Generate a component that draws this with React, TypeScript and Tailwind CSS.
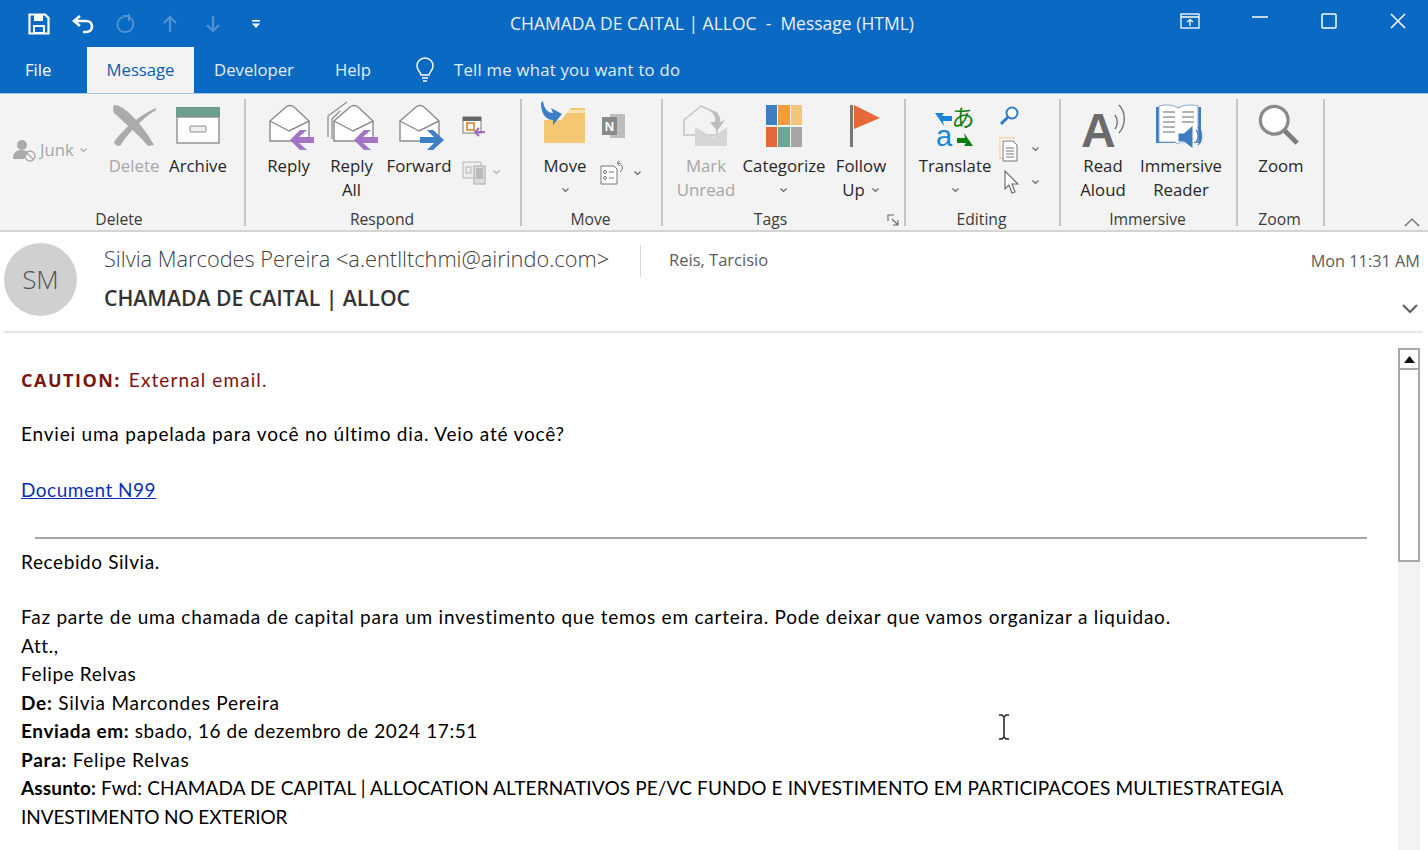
import React from "react";

const seg = '"Open Sans","Noto Sans",sans-serif';

function Chev({ className = "", color = "#666" }: { className?: string; color?: string }) {
  return (
    <svg width="9" height="6" viewBox="0 0 9 6" className={className}>
      <path d="M1.5 1.5 L4.5 4.5 L7.5 1.5" fill="none" stroke={color} strokeWidth="1.2" />
    </svg>
  );
}

function Env({ arrow, dir, all, dx = 4 }: { arrow: string; dir: "l" | "r"; all?: boolean; dx?: number }) {
  return (
    <svg width="50" height="50" viewBox="0 0 50 50" className="overflow-visible">
      {all && (
        <>
          <path d="M1 35 V14 L20 0" fill="none" stroke="#8a8a8a" strokeWidth="1.2" />
          <path d="M5 37 V17 L13 9" fill="none" stroke="#8a8a8a" strokeWidth="1.2" />
        </>
      )}
      <g transform={`translate(${dx} 0)`}>
        <path d="M2 19 L18 5 Q22 2 26 5 L41 19 V39 H2 Z" fill="#fff" stroke="#8a8a8a" strokeWidth="1.4" />
        <path d="M2 19 L21 29 L41 19" fill="none" stroke="#8a8a8a" strokeWidth="1.4" />
        {dir === "l" ? (
          <path d="M22 38 L32 28 H39 L31 35 H46 V41 H31 L39 48 H32 Z" fill={arrow} />
        ) : (
          <path d="M22 35 H36 L29 28 H35 L46 38 L35 48 H29 L36 41 H22 Z" fill={arrow} />
        )}
      </g>
    </svg>
  );
}

function Btn({ w, icon, lines, dim, chev }: { w: number; icon: React.ReactNode; lines: string[]; dim?: boolean; chev?: boolean }) {
  return (
    <div className="flex flex-col items-center shrink-0" style={{ width: w }}>
      <div className="h-[53px] flex items-end justify-center">{icon}</div>
      <div className={`mt-[2px] text-[16.8px] leading-[24px] text-center whitespace-nowrap ${dim ? "text-[#a6a6a6]" : "text-[#262626]"}`}>
        {lines.map((l) => (
          <div key={l}>{l}</div>
        ))}
        {chev && <div className="h-[24px] flex items-center justify-center"><Chev /></div>}
      </div>
    </div>
  );
}

function Group({ w, label, children, pl = 0, lp = 2 }: { w: number; label: string; children: React.ReactNode; pl?: number; lp?: number }) {
  return (
    <div className="relative h-[127px] shrink-0 border-r-2 border-[#c6c6c6] flex flex-col" style={{ width: w }}>
      <div className="flex items-start h-[109px] shrink-0" style={{ paddingLeft: pl }}>{children}</div>
      <div className="text-center text-[15.7px] leading-[22px] shrink-0 text-[#3a3a3a]" style={{ paddingRight: lp }}>{label}</div>
    </div>
  );
}

const bodyLine = "text-[19px] leading-[28.5px] whitespace-nowrap";

export default function App() {
  return (
    <div className="w-[1428px] h-[850px] overflow-hidden bg-white flex flex-col" style={{ fontFamily: seg }}>
      {/* Title bar */}
      <div className="h-[47px] shrink-0 bg-[#0a69c2] flex items-center relative text-white">
        <div className="flex items-center pl-[28px]">
          <svg width="22" height="22" viewBox="0 0 22 22">
            <path d="M1.5 1.5 H17 L20.5 5 V20.5 H1.5 Z" fill="none" stroke="#fff" strokeWidth="2.2" />
            <rect x="6" y="2" width="9" height="6" fill="#fff" />
            <rect x="6" y="13" width="10" height="7" fill="none" stroke="#fff" strokeWidth="2" />
          </svg>
          <svg width="22" height="20" viewBox="0 0 22 20" className="ml-[22px]">
            <path d="M8 2 L2 7 L8 12 M2 7 H14 C22 7 22 18 14 18 H11" fill="none" stroke="#fff" strokeWidth="2.6" />
          </svg>
          <svg width="21" height="21" viewBox="0 0 21 21" className="ml-[21px]">
            <path d="M8 4 C0 6 1 19 10 19 C19 19 21 8 14 4 M14 1 V8 M8 3 H14" fill="none" stroke="#4e92d4" strokeWidth="2" />
          </svg>
          <svg width="16" height="18" viewBox="0 0 16 18" className="ml-[26px]">
            <path d="M8 17 V3 M2 8 L8 2 L14 8" fill="none" stroke="#4e92d4" strokeWidth="2.2" />
          </svg>
          <svg width="16" height="18" viewBox="0 0 16 18" className="ml-[27px]">
            <path d="M8 1 V15 M2 10 L8 16 L14 10" fill="none" stroke="#4e92d4" strokeWidth="2.2" />
          </svg>
          <svg width="10" height="10" viewBox="0 0 10 10" className="ml-[30px]">
            <rect x="1" y="1" width="8" height="1.6" fill="#fff" />
            <path d="M1 4.5 H9 L5 9 Z" fill="#fff" />
          </svg>
        </div>
        <div className="absolute left-[510px] top-[11px] text-[17.5px] leading-[24px] text-[#e8f0fa] whitespace-nowrap">
          CHAMADA DE CAITAL | ALLOC&nbsp; -&nbsp; Message (HTML)
        </div>
        <div className="ml-auto flex items-center h-full pb-[6px] text-white">
          <svg width="20" height="16" viewBox="0 0 20 16" className="mr-[52px]">
            <rect x="1" y="1" width="18" height="14" fill="none" stroke="#fff" strokeWidth="1.3" />
            <path d="M1 4 H19 M10 13 V6.5 M7 9 L10 6.5 L13 9" fill="none" stroke="#fff" strokeWidth="1.3" />
          </svg>
          <svg width="16" height="16" viewBox="0 0 16 16" className="mr-[53px]">
            <path d="M0 4 H16" stroke="#fff" strokeWidth="1.5" />
          </svg>
          <svg width="16" height="16" viewBox="0 0 16 16" className="mr-[53px]">
            <rect x="1" y="1" width="14" height="14" rx="1" fill="none" stroke="#fff" strokeWidth="1.5" />
          </svg>
          <svg width="16" height="16" viewBox="0 0 16 16" className="mr-[22px]">
            <path d="M1 1 L15 15 M15 1 L1 15" stroke="#fff" strokeWidth="1.5" />
          </svg>
        </div>
      </div>

      {/* Tabs */}
      <div className="h-[46px] shrink-0 bg-[#0a69c2] flex items-end text-[16.7px] text-[#e4eefa]">
        <div className="w-[87px] h-[46px] flex items-center pl-[25px] text-white">File</div>
        <div className="w-[107px] h-[46px] flex items-center justify-center bg-[#f3f3f3] text-[#0a5fb0]">Message</div>
        <div className="w-[120px] h-[46px] flex items-center justify-center">Developer</div>
        <div className="w-[58px] h-[46px] flex items-center justify-center ml-[10px]">Help</div>
        <div className="h-[46px] flex items-center ml-[32px]">
          <svg width="22" height="26" viewBox="0 0 22 26">
            <path d="M7 18 C6 14 3 13 3 9 A8 8 0 0 1 19 9 C19 13 16 14 15 18 Z M8 21 H14 M9 24 H13" fill="none" stroke="#fff" strokeWidth="1.4" />
          </svg>
          <span className="ml-[18px] tracking-[0.25px]">Tell me what you want to do</span>
        </div>
      </div>

      {/* Ribbon */}
      <div className="h-[139px] shrink-0 bg-[#f3f3f3] border-t-[1px] border-[#9fc6ea] border-b-[2px] border-b-[#d4d4d4] flex pt-[5px] relative">
        <Group w={246} label="Delete" lp={6}>
          <div className="w-[105px] shrink-0 flex items-center pl-[12px] pt-[38px] text-[#a6a6a6] text-[16.7px]">
            <svg width="26" height="26" viewBox="0 0 26 26">
              <circle cx="10" cy="8" r="5" fill="#aaa" />
              <path d="M1 22 C1 14 6 13 10 13 C13 13 15 14 16 16 L12 22 Z" fill="#aaa" />
              <circle cx="18" cy="19" r="5" fill="none" stroke="#aaa" strokeWidth="1.4" />
              <path d="M15 16 L21 22" stroke="#aaa" strokeWidth="1.4" />
            </svg>
            <span className="ml-[2px]">Junk</span>
            <Chev className="ml-[5px]" color="#aaa" />
          </div>
          <Btn w={58} dim lines={["Delete"]} icon={
            <svg width="46" height="42" viewBox="0 0 46 42" className="mb-[5px]">
              <path d="M3 0 C8 0 12 3 16 6 C26 15 36 27 43 40 L37 41 C27 29 14 18 3 8 Q1 3 3 0 Z" fill="#ababab" />
              <path d="M45 3 C30 9 12 24 3 37 Q4 41 9 41 C18 27 32 13 45 5 Z" fill="#ababab" />
            </svg>
          } />
          <Btn w={70} lines={["Archive"]} icon={
            <svg width="46" height="37" viewBox="0 0 46 37" className="mb-[8px]">
              <rect x="1" y="0" width="44" height="10" fill="#6d9d8d" />
              <rect x="2" y="10" width="42" height="26" fill="#fff" stroke="#8d8d8d" strokeWidth="1.4" />
              <rect x="15" y="19" width="16" height="6" rx="1" fill="#eee" stroke="#8d8d8d" />
            </svg>
          } />
        </Group>

        <Group w={276} label="Respond" pl={16}>
          <Btn w={53} lines={["Reply"]} icon={<Env arrow="#a474c4" dir="l" />} />
          <Btn w={73} lines={["Reply", "All"]} icon={<Env arrow="#a474c4" dir="l" all dx={5} />} />
          <Btn w={62} lines={["Forward"]} icon={<Env arrow="#3d7fc4" dir="r" />} />
          <div className="w-[60px] shrink-0 flex flex-col pl-[12px] pt-[16px] gap-[20px]">
            <svg width="24" height="24" viewBox="0 0 24 24">
              <rect x="1" y="2" width="18" height="16" fill="#fff" stroke="#777" />
              <rect x="1" y="2" width="18" height="4" fill="#666" />
              <rect x="5" y="8" width="7" height="7" fill="#fff" stroke="#d98324" strokeWidth="1.6" />
              <path d="M23 17 H13 M17 13 L13 17 L17 21" fill="none" stroke="#9e6fc0" strokeWidth="2" />
            </svg>
            <div className="flex items-center">
              <svg width="26" height="26" viewBox="0 0 26 26">
                <rect x="1" y="3" width="18" height="16" fill="#eee" stroke="#b5b5b5" />
                <rect x="12" y="7" width="11" height="18" fill="#ddd" stroke="#aaa" />
                <rect x="14" y="9" width="7" height="11" fill="#bbb" />
                <rect x="4" y="8" width="5" height="6" fill="none" stroke="#b5b5b5" />
              </svg>
              <Chev className="ml-[4px]" color="#aaa" />
            </div>
          </div>
        </Group>

        <Group w={141} label="Move" pl={19}>
          <Btn w={48} lines={["Move"]} chev icon={
            <svg width="46" height="44" viewBox="0 0 46 44" className="mb-[7px] -ml-[2px]">
              <path d="M3 19 L20 19 L30 7 H44 V42 H3 Z" fill="#f4c873" />
              <path d="M27 9 H44 V12 H26Z" fill="#fbe3b4" />
              <path d="M2 0 C3 8 7 12 12 12 L10 7 L21 13 L12 24 L12 19 C5 19 0 13 0 2 Z" fill="#3d7fc4" />
            </svg>
          } />
          <div className="flex flex-col pl-[11px] pt-[14px] gap-[21px]">
            <svg width="26" height="26" viewBox="0 0 26 26" className="ml-[1px]">
              <rect x="9" y="1" width="15" height="24" fill="#bdbdbd" />
              <rect x="1" y="4" width="15" height="18" fill="#8a8a8a" />
              <text x="8.5" y="18" textAnchor="middle" fontSize="13" fontWeight="700" fill="#fff" fontFamily="Liberation Sans">N</text>
            </svg>
            <div className="flex items-center">
              <svg width="26" height="26" viewBox="0 0 26 26">
                <path d="M1 6 H14 L17 9 V24 H1 Z" fill="#fff" stroke="#777" />
                <circle cx="5" cy="12" r="1.5" fill="none" stroke="#777" />
                <circle cx="5" cy="18" r="1.5" fill="none" stroke="#777" />
                <path d="M9 12 H14 M9 18 H14" stroke="#777" />
                <path d="M17 3 C23 3 24 9 20 12 M17 3 L20 1 M17 3 L20 6" fill="none" stroke="#777" />
              </svg>
              <Chev className="ml-[7px]" />
            </div>
          </div>
        </Group>

        <Group w={243} label="Tags" pl={13} lp={26}>
          <Btn w={60} dim lines={["Mark", "Unread"]} icon={
            <svg width="46" height="42" viewBox="0 0 46 42" className="mb-[5px]">
              <path d="M1 15 L18 1 L34 8 V30 H1 Z" fill="#f3f3f3" stroke="#c4c4c4" strokeWidth="1.5" />
              <path d="M12 22 L30 32 L44 22 V41 H12 Z" fill="#d6d6d6" />
              <path d="M26 5 C36 7 38 12 37 17 L42 15 L34 26 L27 17 L32 17 C33 12 31 9 26 5Z" fill="#bdbdbd" />
            </svg>
          } />
          <Btn w={96} lines={["Categorize"]} chev icon={
            <div className="grid grid-cols-3 gap-x-[1px] gap-y-[2px] w-[36px] h-[42px] mb-[5px]">
              <div className="bg-[#3f7fc1]" /><div className="bg-[#f59c38]" /><div className="bg-[#f2c579]" />
              <div className="bg-[#e4683a]" /><div className="bg-[#6fa797]" /><div className="bg-[#a6a6a6]" />
            </div>
          } />
          <div className="w-[60px] shrink-0 -ml-[1px]">
            <Btn w={60} lines={["Follow"]} icon={
              <svg width="38" height="42" viewBox="0 0 38 42" className="mb-[5px] ml-[2px]">
                <rect x="7" y="0" width="3" height="42" fill="#777" />
                <path d="M11 0 L37 13 L11 24 Z" fill="#e4683a" />
              </svg>
            } />
            <div className="text-[16.8px] leading-[24px] text-[#262626] flex items-center justify-center gap-[6px]">Up<Chev /></div>
          </div>
          <svg width="12" height="12" viewBox="0 0 12 12" className="absolute right-[5px] bottom-[0px]">
            <path d="M1 7 V1 H7 M5 5 L11 11 M11 6 V11 H6" fill="none" stroke="#666" strokeWidth="1.1" />
          </svg>
        </Group>

        <Group w={155} label="Editing" pl={9}>
          <Btn w={80} lines={["Translate"]} chev icon={
            <svg width="40" height="42" viewBox="0 0 40 42" className="mb-[5px] overflow-visible">
              <path d="M0 8 H9 L7 11 H17 V16 H8 L9 21 Z" fill="#1784d9" />
              <text x="28" y="21" textAnchor="middle" fontSize="23" fill="#107c10" fontFamily="Noto Sans CJK JP">あ</text>
              <text x="9" y="41" textAnchor="middle" fontSize="29" fill="#1784d9" fontFamily="Liberation Sans">a</text>
              <path d="M38 41 H29 L31 38 H22 V33 H30 L29 28 Z" fill="#107c10" />
            </svg>
          } />
          <div className="flex flex-col pl-[4px] pt-[6px]">
            <svg width="22" height="22" viewBox="0 0 22 22">
              <circle cx="13" cy="8" r="5.5" fill="#fff" stroke="#2a7cc7" strokeWidth="2" />
              <path d="M9 12 L2 19" stroke="#2a7cc7" strokeWidth="3" />
            </svg>
            <div className="flex items-center mt-[9px]">
              <svg width="22" height="26" viewBox="0 0 22 26">
                <rect x="1" y="2" width="14" height="20" fill="#fff" stroke="#f1c58c" />
                <path d="M4 5 H14 L18 9 V25 H4 Z" fill="#fff" stroke="#777" />
                <path d="M7 12 H15 M7 15 H15 M7 18 H15 M7 21 H15" stroke="#777" />
              </svg>
              <Chev className="ml-[10px]" />
            </div>
            <div className="flex items-center mt-[7px]">
              <svg width="22" height="26" viewBox="0 0 22 26">
                <path d="M6 2 V20 L10 16 L13 24 L16 23 L13 15 L19 15 Z" fill="#fff" stroke="#666" strokeWidth="1.1" />
              </svg>
              <Chev className="ml-[10px]" />
            </div>
          </div>
        </Group>

        <Group w={177} label="Immersive" pl={9}>
          <Btn w={66} lines={["Read", "Aloud"]} icon={
            <svg width="48" height="46" viewBox="0 0 48 46" className="mb-[5px] overflow-visible">
              <text x="2" y="46" fontSize="48" fontWeight="700" fill="#6b6b6b" fontFamily="Liberation Sans">A</text>
              <path d="M36 14 C39 18 39 24 36 28 M40 4 C47 11 47 24 40 32" fill="none" stroke="#6b6b6b" strokeWidth="1.3" />
            </svg>
          } />
          <Btn w={90} lines={["Immersive", "Reader"]} icon={
            <svg width="50" height="46" viewBox="0 0 50 46" className="mb-[2px] -ml-[5px]">
              <path d="M2 3 H47 V39 H2 Z" fill="#3f7cbf" />
              <path d="M5 2 C12 0 20 1 24 4 C29 1 38 0 44 2 V38 H27 L24 40 L21 38 H5 Z" fill="#fff" stroke="#8aa9cc" />
              <path d="M9 8 H21 M9 13 H21 M9 18 H21 M9 23 H21 M9 28 H21 M28 8 H40 M28 13 H40 M28 18 H40" stroke="#999" strokeWidth="1.3" />
              <path d="M24 29 H30 L39 21 V45 L30 38 H24 Z" fill="#3f7cbf" stroke="#fff" />
              <path d="M42 26 C45 29 45 35 42 38 M44 23 C49 28 49 36 44 41" fill="none" stroke="#3f7cbf" strokeWidth="1.2" />
            </svg>
          } />
        </Group>

        <Group w={87} label="Zoom">
          <Btn w={86} lines={["Zoom"]} icon={
            <svg width="42" height="42" viewBox="0 0 44 44" className="mb-[6px] -ml-[5px]">
              <circle cx="17" cy="17" r="14.5" fill="#fff" stroke="#8a8a8a" strokeWidth="3.5" />
              <path d="M28 28 L41 41" stroke="#7d7d7d" strokeWidth="5" />
            </svg>
          } />
        </Group>

        <svg width="16" height="10" viewBox="0 0 16 10" className="absolute right-[8px] bottom-[3px]">
          <path d="M1 9 L8 2 L15 9" fill="none" stroke="#666" strokeWidth="1.2" />
        </svg>
      </div>

      {/* Header */}
      <div className="h-[101px] shrink-0 relative">
        <div className="flex pl-[4px] pt-[11px]">
          <div className="w-[73px] h-[73px] rounded-full bg-[#d0d0d0] flex items-center justify-center text-[26px] font-light text-[#525252] shrink-0">SM</div>
          <div className="ml-[27px] pt-[2px]">
            <div className="flex items-start h-[34px]">
              <span className="text-[21.75px] font-light leading-[28px] text-[#404040] whitespace-nowrap">Silvia Marcodes Pereira &lt;a.entlltchmi@airindo.com&gt;</span>
              <div className="w-[1px] h-[32px] bg-[#d8d8d8] ml-[31px]" />
              <span className="text-[16.5px] leading-[30px] ml-[28px] text-[#5c5c5c]">Reis, Tarcisio</span>
            </div>
            <div className="text-[21.2px] font-semibold leading-[28px] text-[#333] mt-[5px] whitespace-nowrap">CHAMADA DE CAITAL | ALLOC</div>
          </div>
          <div className="absolute right-[8px] top-[17px] text-[16.3px] leading-[24px] text-[#5c5c5c]">Mon 11:31 AM</div>
          <svg width="18" height="12" viewBox="0 0 18 12" className="absolute right-[9px] top-[71px]">
            <path d="M2 2 L9 9 L16 2" fill="none" stroke="#5c5c5c" strokeWidth="2" />
          </svg>
        </div>
        <div className="absolute left-[4px] right-[5px] bottom-0 h-[2px] bg-[#e6e6e6]" />
      </div>

      {/* Body */}
      <div className="flex-1 relative overflow-hidden flex" style={{ fontFamily: '"Lato","Open Sans",sans-serif' }}>
        <div className="flex-1 pl-[21px] pt-[33px] text-black">
          <div className={`${bodyLine} text-[#7b1515]`}><b className="text-[18px] tracking-[1.5px]" style={{ fontFamily: '"Open Sans",sans-serif' }}>CAUTION:</b> <span className="ml-[3px] tracking-[1.1px]">External email.</span></div>
          <div className={`${bodyLine} mt-[25.5px] tracking-[0.8px]`}>Enviei uma papelada para você no último dia. Veio até você?</div>
          <div className={`${bodyLine} mt-[27.5px] text-[#0b2fb5] underline tracking-[0.5px]`}>Document N99</div>
          <div className="h-[2px] bg-[#a6a6a6] ml-[14px] mr-[31px] mt-[32.5px]" />
          <div className={`${bodyLine} mt-[9px] tracking-[0.6px]`}>Recebido Silvia.</div>
          <div className={`${bodyLine} mt-[26.5px] tracking-[0.78px]`}>Faz parte de uma chamada de capital para um investimento que temos em carteira. Pode deixar que vamos organizar a liquidao.</div>
          <div className={`${bodyLine} tracking-[0.6px]`}>Att.,</div>
          <div className={`${bodyLine} tracking-[0.6px]`}>Felipe Relvas</div>
          <div className={`${bodyLine} tracking-[0.75px]`}><b>De:</b> Silvia Marcondes Pereira</div>
          <div className={`${bodyLine} tracking-[0.6px]`}><b>Enviada em:</b> sbado, 16 de dezembro de 2024 17:51</div>
          <div className={`${bodyLine} tracking-[0.7px]`}><b>Para:</b> Felipe Relvas</div>
          <div className={`${bodyLine} tracking-[0.13px]`}><b>Assunto:</b> Fwd: CHAMADA DE CAPITAL | ALLOCATION ALTERNATIVOS PE/VC FUNDO E INVESTIMENTO EM PARTICIPACOES MULTIESTRATEGIA</div>
          <div className={`${bodyLine} -tracking-[0.1px]`}>INVESTIMENTO NO EXTERIOR</div>
        </div>
        <div className="w-[22px] shrink-0 mr-[8px] mt-[15px] bg-[#f3f3f3] flex flex-col">
          <div className="h-[22px] bg-white border-2 border-[#a8a8a8] flex items-center justify-center">
            <svg width="11" height="7" viewBox="0 0 11 7"><path d="M5.5 0 L11 7 H0 Z" fill="#111" /></svg>
          </div>
          <div className="h-[192px] bg-white border-2 border-t-0 border-[#a8a8a8]" />
        </div>
        {/* I-beam cursor */}
        <svg width="12" height="26" viewBox="0 0 12 26" className="absolute left-[998px] top-[381px]">
          <path d="M1 1 H4 L6 3 L8 1 H11 M6 3 V23 M1 25 H4 L6 23 L8 25 H11" fill="none" stroke="#222" strokeWidth="1.5" />
        </svg>
      </div>
    </div>
  );
}
